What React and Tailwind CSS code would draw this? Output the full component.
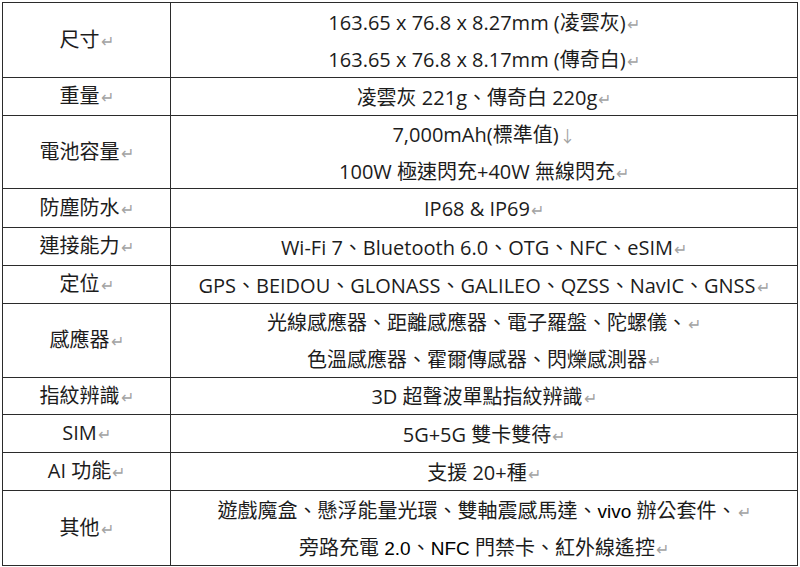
const Ret = () => <span className="text-[#a3a3a3] text-[16px] ml-[1px]">↵</span>;
const Down = () => <span className="text-[#a3a3a3] text-[16px] ml-[1px]">↓</span>;
const Ar = ({ children }) => (
    <span className="font-['Liberation_Sans','Noto_Sans_CJK_TC',sans-serif] text-[19px] text-black">{children}</span>
);

const rows = [
    {
        label: '尺寸',
        h: 'h-[75px]',
        lines: [
            <>163.65 x 76.8 x 8.27mm (凌雲灰)<Ret /></>,
            <>163.65 x 76.8 x 8.17mm (傳奇白)<Ret /></>,
        ],
    },
    { label: '重量', h: 'h-[38px]', lines: [<>凌雲灰 221g、傳奇白 220g<Ret /></>] },
    {
        label: '電池容量',
        h: 'h-[73px]',
        lines: [
            <>7,000mAh(標準值)<Down /></>,
            <>100W 極速閃充+40W 無線閃充<Ret /></>,
        ],
    },
    { label: '防塵防水', h: 'h-[39px]', lines: [<>IP68 &amp; IP69<Ret /></>] },
    { label: '連接能力', h: 'h-[38px]', lines: [<>Wi-Fi 7、Bluetooth 6.0、OTG、NFC、eSIM<Ret /></>] },
    { label: '定位', h: 'h-[38px]', lines: [<>GPS、BEIDOU、GLONASS、GALILEO、QZSS、NavIC、GNSS<Ret /></>] },
    {
        label: '感應器',
        h: 'h-[74px]',
        lines: [
            <>光線感應器、距離感應器、電子羅盤、陀螺儀、<Ret /></>,
            <>色溫感應器、霍爾傳感器、閃爍感測器<Ret /></>,
        ],
    },
    { label: '指紋辨識', h: 'h-[37px]', lines: [<>3D 超聲波單點指紋辨識<Ret /></>] },
    { label: 'SIM', h: 'h-[38px]', lines: [<>5G+5G 雙卡雙待<Ret /></>] },
    { label: 'AI 功能', h: 'h-[38px]', lines: [<>支援 20+種<Ret /></>] },
    {
        label: '其他',
        h: 'h-[75px]',
        lines: [
            <>遊戲魔盒、懸浮能量光環、雙軸震感馬達、<Ar>vivo</Ar> 辦公套件、<Ret /></>,
            <>旁路充電 <Ar>2.0</Ar>、<Ar>NFC</Ar> 門禁卡、紅外線遙控<Ret /></>,
        ],
    },
];

export default function App() {
    return (
        <div className="w-[800px] h-[567px] bg-white pt-[2px] pl-[2px] font-['Open_Sans','Noto_Sans_CJK_TC',sans-serif] text-[20px] text-[#1c1c1c]">
            <div className="w-[796px] border-t border-l border-[#2b2b2b]">
                {rows.map((r) => (
                    <div key={r.label} className={`flex ${r.h}`}>
                        <div className="w-[168px] shrink-0 flex items-center justify-center border-r border-b border-[#2b2b2b] leading-[36px]">
                            <span>{r.label}<Ret /></span>
                        </div>
                        <div className="flex-1 min-h-0 flex flex-col items-center justify-center pt-[3px] border-r border-b border-[#2b2b2b] leading-[36px]">
                            {r.lines.map((l, i) => (
                                <div key={i} className="whitespace-nowrap">{l}</div>
                            ))}
                        </div>
                    </div>
                ))}
            </div>
        </div>
    );
}
